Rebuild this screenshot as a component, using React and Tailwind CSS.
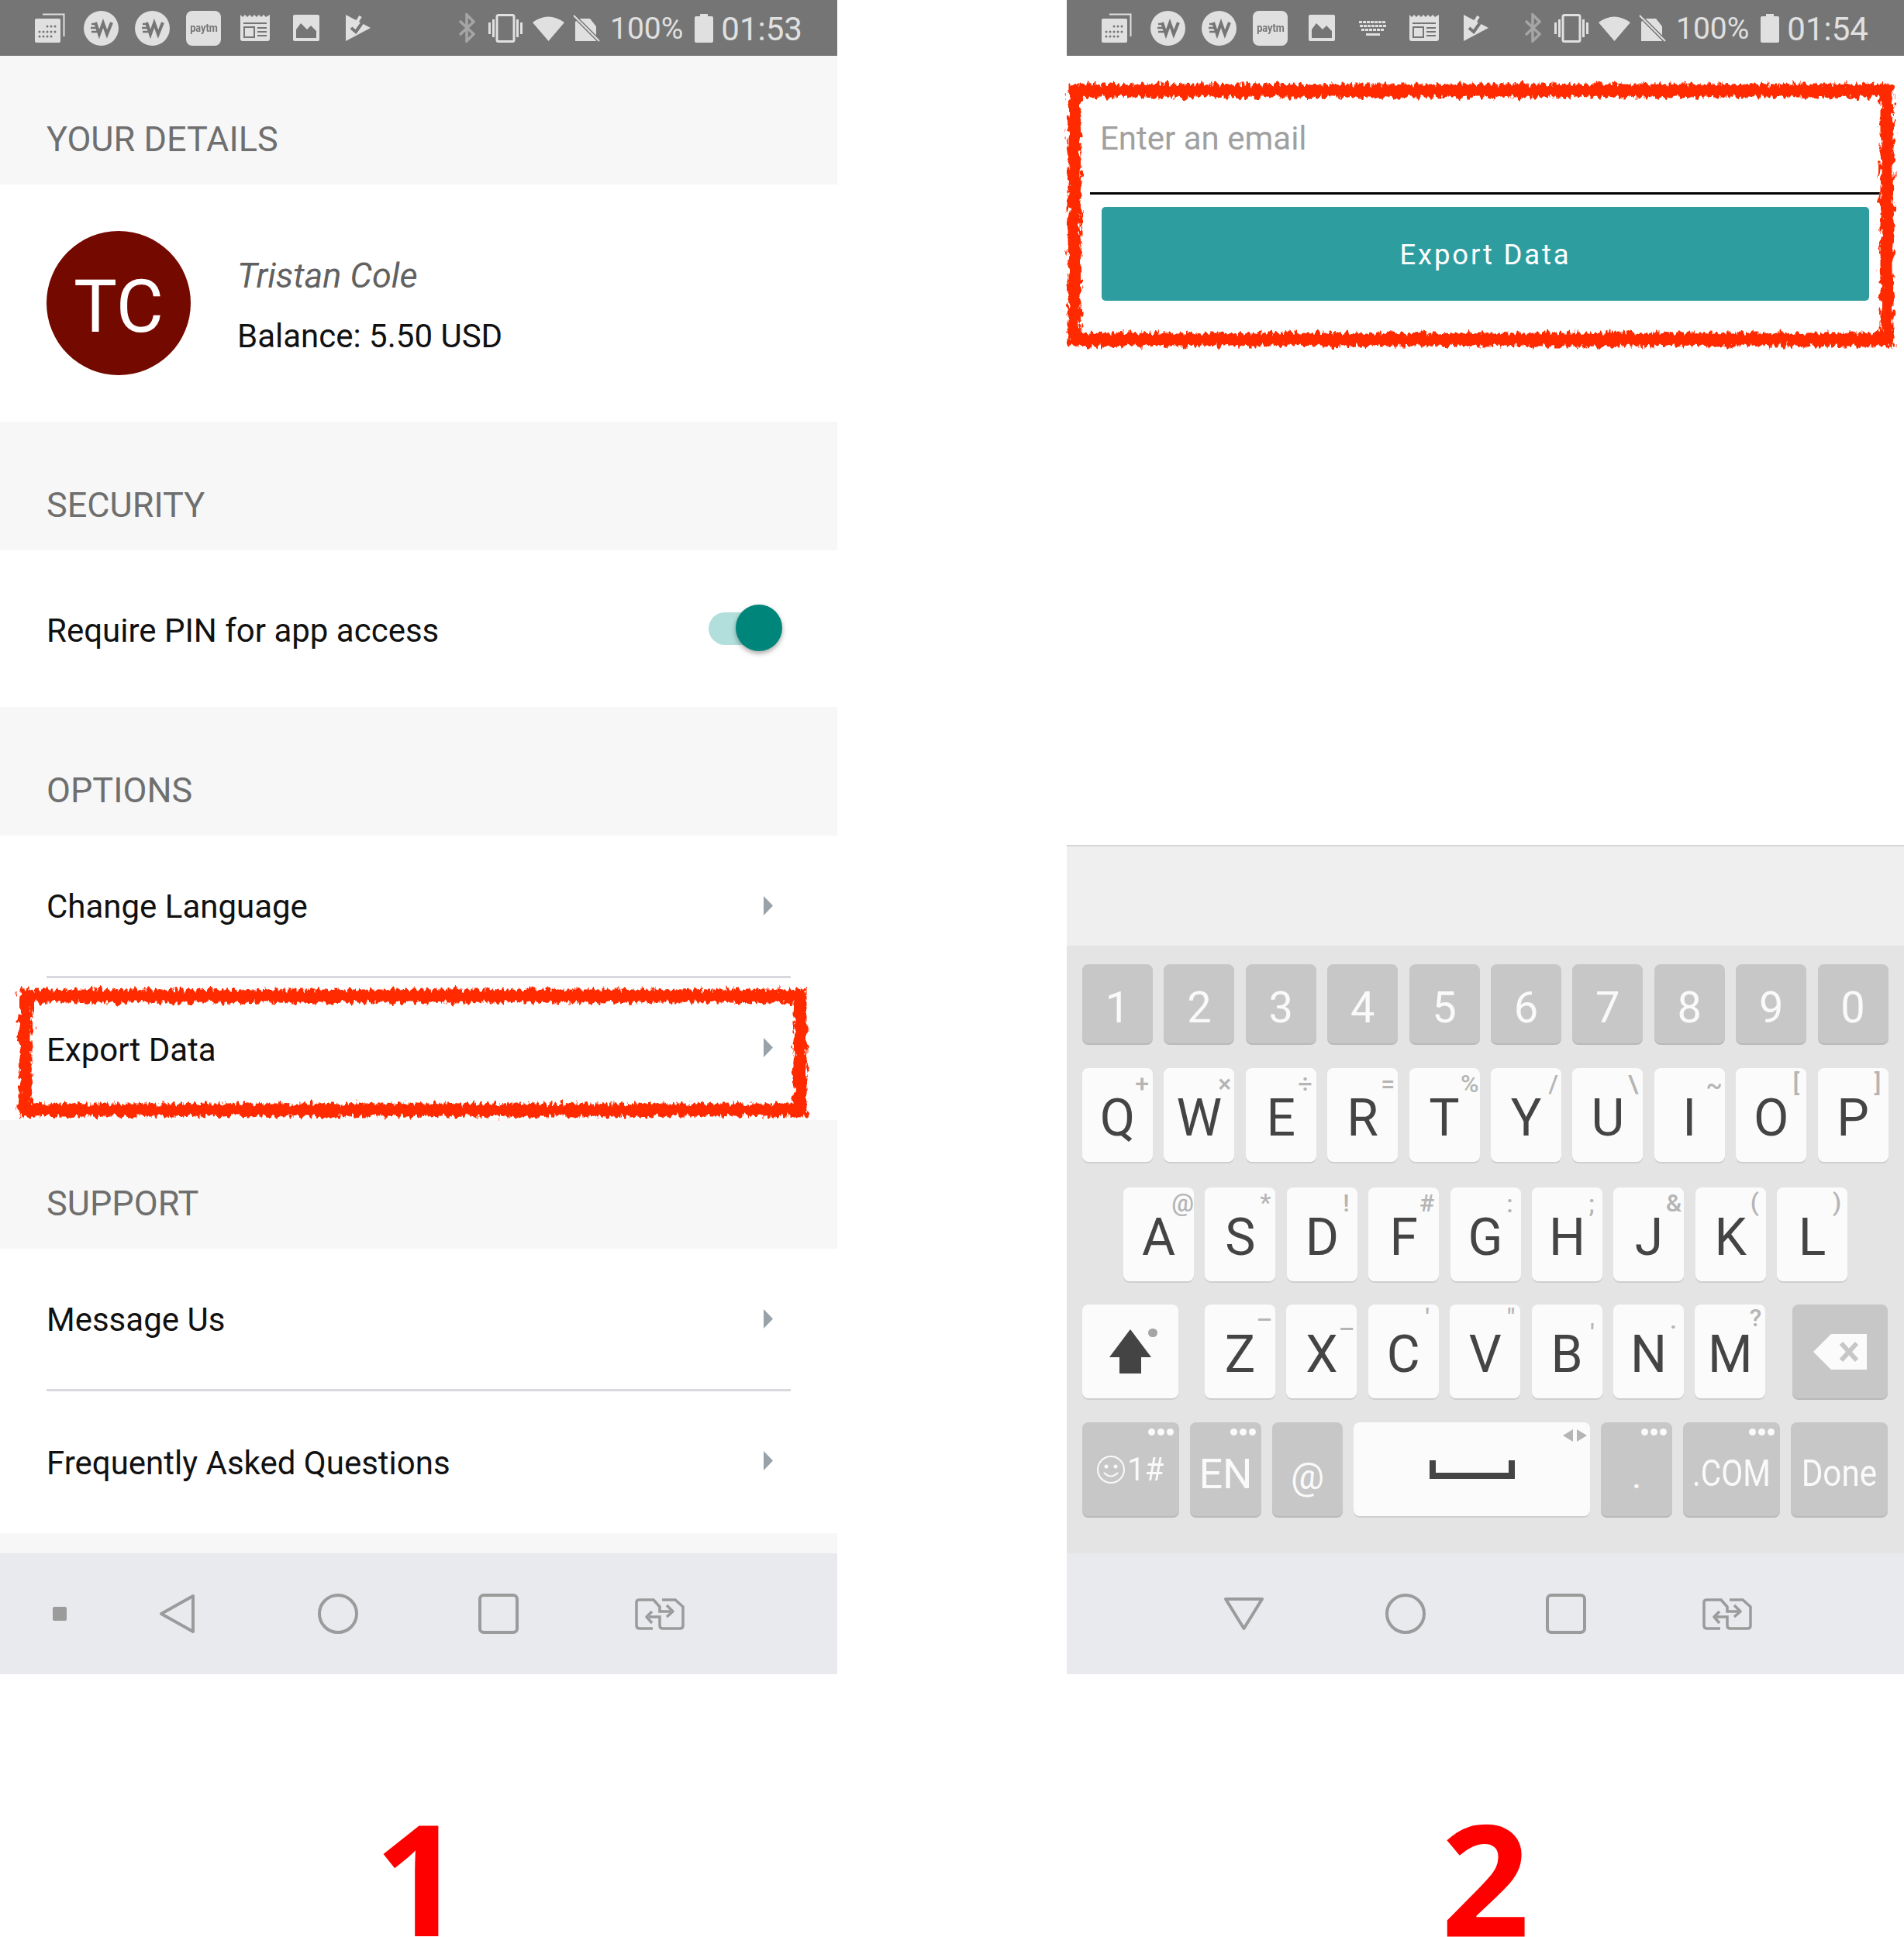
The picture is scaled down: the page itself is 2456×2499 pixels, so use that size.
const ICON = "#e0e0e0";
const BAR = "#757575";

function CalendarIcon({ className }) {
  return (
    <svg className={className} width="39" height="38" viewBox="0 0 39 38">
      <path d="M10 1.5H37.5V30" fill="none" stroke={ICON} strokeWidth="2" />
      <rect x="0" y="7" width="33" height="31" rx="2" fill={ICON} />
      <g fill={BAR}>
        {[16, 21, 26].map((x) => <circle key={x} cx={x} cy="17" r="1.5" />)}
        {[6, 11, 16, 21, 26].map((x) => <circle key={x} cx={x} cy="24" r="1.5" />)}
        {[6, 11, 16, 21].map((x) => <circle key={x} cx={x} cy="30" r="1.5" />)}
      </g>
    </svg>
  );
}

function WIcon({ className }) {
  return (
    <svg className={className} width="45" height="45" viewBox="0 0 45 45">
      <circle cx="22.5" cy="22.5" r="22.5" fill={ICON} />
      <path d="M10 17H17M9 22H16M10 27H17" stroke={BAR} strokeWidth="2.4" fill="none" />
      <path d="M15 15L20 30L25 16L30 30L36 15" stroke={BAR} strokeWidth="4" fill="none" />
    </svg>
  );
}

function PaytmIcon({ className }) {
  return (
    <div className={`flex h-[45px] w-[45px] items-center justify-center rounded-[8px] bg-[#e0e0e0] ${className}`}>
      <span className="scale-x-[0.85] text-[15px] font-bold leading-none text-[#757575]">paytm</span>
    </div>
  );
}

function NewsIcon({ className }) {
  return (
    <svg className={className} width="38" height="34" viewBox="0 0 38 34">
      <path d="M0 0L3 3L6 0L9 3L12 0L15 3L18 0L21 3L24 0L27 3L30 0L33 3L38 0V31Q38 34 35 34H3Q0 34 0 31Z" fill={ICON} />
      <path d="M4 10H34V12H4ZM4 15H19V30H4ZM22 16H34V18H22ZM22 21H34V23H22ZM22 26H34V28H22Z" fill={BAR} />
      <rect x="6" y="17" width="11" height="11" fill={ICON} />
    </svg>
  );
}

function ImageIcon({ className }) {
  return (
    <svg className={className} width="34" height="34" viewBox="0 0 34 34">
      <rect width="34" height="34" rx="2" fill={ICON} />
      <path d="M4 30V19L10 11L18 19L23 14L30 21V30Z" fill={BAR} />
    </svg>
  );
}

function KeyboardIcon({ className }) {
  return (
    <svg className={className} width="36" height="19" viewBox="0 0 36 19" fill={ICON}>
      {[0, 5, 10, 15, 20, 25, 30].map((x) => <rect key={x} x={x} y="0" width="4" height="3" />)}
      {[0, 5, 10, 15, 20, 25, 30].map((x) => <rect key={x} x={x + 1} y="5" width="4" height="3" />)}
      {[0, 5, 10, 15, 20, 25].map((x) => <rect key={x} x={x + 3} y="10" width="4" height="3" />)}
      <rect x="9" y="16" width="18" height="3" />
    </svg>
  );
}

function PlayCheckIcon({ className }) {
  return (
    <svg className={className} width="32" height="34" viewBox="0 0 32 34">
      <path d="M0 0L32 17L0 34Z" fill={ICON} />
      <path d="M7 17L13 22L25 5" stroke={BAR} strokeWidth="4" fill="none" />
      <path d="M14 10L19 2" stroke={ICON} strokeWidth="4" />
    </svg>
  );
}

function StatusBar({ left, time, clockClass }) {
  return (
    <div className="flex h-[72px] items-center bg-[#757575] pl-[45px] text-[#e0e0e0]">
      {left}
      <div className={`flex items-center ${clockClass}`}>
        <svg width="22" height="38" viewBox="0 0 22 38">
          <path d="M2 10L20 27L11 36V2L20 11L2 28" stroke="#a5a5a5" strokeWidth="3.5" fill="none" />
        </svg>
        <svg className="ml-[17px]" width="44" height="37" viewBox="0 0 44 37">
          <rect x="11" y="1.5" width="22" height="34" rx="2" stroke={ICON} strokeWidth="3" fill="none" />
          <path d="M1.5 11V26M6.5 7V30M37.5 7V30M42.5 11V26" stroke={ICON} strokeWidth="3" />
        </svg>
        <svg className="ml-[13px]" width="41" height="33" viewBox="0 0 41 33">
          <path d="M0 9Q20 -6 41 9L20.5 33Z" fill={ICON} />
        </svg>
        <svg className="ml-[11px]" width="35" height="35" viewBox="0 0 35 35">
          <path d="M9 5H22L30 15V34H3V9Z" fill={ICON} />
          <path d="M0 0L34 34" stroke={BAR} strokeWidth="5" />
          <path d="M1 1L34 34" stroke={ICON} strokeWidth="2" />
        </svg>
        <span className="ml-[13px] pt-[3px] text-[39px] leading-none">100%</span>
        <svg className="ml-[15px]" width="24" height="37" viewBox="0 0 24 37">
          <path d="M7 0H17V3H22Q24 3 24 5V35Q24 37 22 37H2Q0 37 0 35V5Q0 3 2 3H7Z" fill={ICON} />
        </svg>
        <span className="ml-[10px] pt-[3px] text-[42px] leading-none">{time}</span>
      </div>
    </div>
  );
}

function NavBar({ back }) {
  return (
    <div className="flex h-[156px] items-center bg-[#e9eaee] text-[#9b9b9b]">
      {back}
      <svg width="52" height="52" viewBox="0 0 52 52">
        <circle cx="26" cy="26" r="24" stroke="#9b9b9b" strokeWidth="4" fill="none" />
      </svg>
      <svg className="ml-[155px]" width="52" height="52" viewBox="0 0 52 52">
        <rect x="2" y="2" width="48" height="48" rx="5" stroke="#9b9b9b" strokeWidth="4" fill="none" />
      </svg>
      <svg className="ml-[150px]" width="64" height="41" viewBox="0 0 64 41" fill="none" stroke="#9b9b9b" strokeWidth="3.5">
        <path d="M23 39H6Q2 39 2 35V5Q2 2 6 2H24L32 11V17H46" />
        <path d="M41 9L49 17L41 24" strokeLinejoin="round" />
        <path d="M35 2H52L62 11V35Q62 39 58 39H36Q32 39 32 35V24H18" />
        <path d="M22 17L15 24L22 32" strokeLinejoin="round" />
      </svg>
    </div>
  );
}

function SectionHeader({ title }) {
  return (
    <div className="h-[166px] bg-[#f7f7f7] pl-[60px] pt-[83px] text-[45px] leading-[50px] text-[#6f6f6f]">{title}</div>
  );
}

function MenuRow({ label, divider }) {
  return (
    <div className="mx-[60px] flex h-[183.5px] items-center justify-between border-b-[3px] border-[#d8d8de]" style={divider ? undefined : { borderColor: "transparent" }}>
      <span className={`text-[42px] text-[#111] ${divider ? "pt-[2px]" : "pt-[6px]"}`}>{label}</span>
      <svg className="mr-[23px]" width="12" height="25" viewBox="0 0 12 25">
        <path d="M0 0L12 12.5L0 25Z" fill="#98a2a8" />
      </svg>
    </div>
  );
}

function RoughBox({ x, y, w, h, id }) {
  return (
    <svg className="pointer-events-none absolute left-0" width="1080" height="600" style={{ top: y - 40, overflow: "visible" }}>
      <defs>
        <filter id={id} x="-5%" y="-20%" width="110%" height="140%">
          <feTurbulence type="fractalNoise" baseFrequency="0.22 0.09" numOctaves="3" seed="4" />
          <feDisplacementMap in="SourceGraphic" scale="14" xChannelSelector="R" yChannelSelector="G" />
        </filter>
      </defs>
      <rect x={x} y="40" width={w} height={h} fill="none" stroke="#ff2a00" strokeWidth="17" filter={`url(#${id})`} />
    </svg>
  );
}

function Phone1() {
  return (
    <div className="relative w-[1080px]">
      <StatusBar
        time="01:53"
        clockClass="ml-[113px]"
        left={
          <>
            <CalendarIcon />
            <WIcon className="ml-[24px]" />
            <WIcon className="ml-[21px]" />
            <PaytmIcon className="ml-[21px]" />
            <NewsIcon className="ml-[25px]" />
            <ImageIcon className="ml-[30px]" />
            <PlayCheckIcon className="ml-[34px]" />
          </>
        }
      />
      <SectionHeader title="YOUR DETAILS" />
      <div className="flex h-[306px] items-center pl-[60px]">
        <div className="flex h-[186px] w-[186px] items-center justify-center rounded-full bg-[#740900] pt-[10px] text-[94px] text-white">TC</div>
        <div className="ml-[60px] pt-[8px]">
          <div className="text-[45px] italic leading-[50px] text-[#616161]">Tristan Cole</div>
          <div className="mt-[28px] text-[42px] leading-[50px] text-[#111]">Balance: 5.50 USD</div>
        </div>
      </div>
      <SectionHeader title="SECURITY" />
      <div className="flex h-[202px] items-center justify-between pl-[60px]">
        <span className="pt-[4px] text-[42px] text-[#111]">Require PIN for app access</span>
        <div className="relative mr-[80px] h-[42px] w-[86px] rounded-full bg-[#b2dfdb]">
          <div className="absolute left-[35px] top-[-10px] h-[60px] w-[60px] rounded-full bg-[#00857a] shadow-[0_3px_6px_rgba(0,0,0,0.35)]"></div>
        </div>
      </div>
      <SectionHeader title="OPTIONS" />
      <MenuRow label="Change Language" divider />
      <MenuRow label="Export Data" />
      <SectionHeader title="SUPPORT" />
      <MenuRow label="Message Us" divider />
      <MenuRow label="Frequently Asked Questions" />
      <div className="h-[26px] bg-[#f7f7f7]"></div>
      <NavBar
        back={
          <>
            <div className="ml-[68px] h-[18px] w-[18px] rounded-[2px] bg-[#9b9b9b]"></div>
            <svg className="ml-[119px] mr-[157px]" width="48" height="52" viewBox="0 0 48 52">
              <path d="M44 3L3 26L44 49Z" stroke="#9b9b9b" strokeWidth="4" fill="none" strokeLinejoin="round" />
            </svg>
          </>
        }
      />
      <RoughBox id="rough1" x={33} y={1285} w={999} h={147} />
      <div className="mt-[161px] text-center font-['Open_Sans'] text-[200px] font-bold leading-[200px] text-[#ff0000]">1</div>
    </div>
  );
}

const hintBase = "absolute text-[32px] font-medium leading-none text-[#b5b5b5]";

function Key({ label, hint, hintClass = "right-[3px] top-[5px]", className = "w-[91px] h-[121px] text-[66px]" }) {
  return (
    <div className={`relative flex items-center justify-center rounded-[8px] bg-[#fbfbfb] pt-[8px] leading-none text-[#444] shadow-[0_2px_0_#cfcfcf] ${className}`}>
      {label}
      {hint && <span className={`${hintBase} ${hintClass}`}>{hint}</span>}
    </div>
  );
}

function GrayKey({ children, dots, className }) {
  return (
    <div className={`relative flex h-[121px] items-center justify-center rounded-[8px] bg-[#c7c7c7] text-[#fafafa] shadow-[0_2px_0_#b9b9b9] ${className}`}>
      {children}
      {dots && (
        <div className="absolute right-[7px] top-[8px] flex gap-[3px]">
          <div className="h-[9px] w-[9px] rounded-full bg-[#fafafa]"></div>
          <div className="h-[9px] w-[9px] rounded-full bg-[#fafafa]"></div>
          <div className="h-[9px] w-[9px] rounded-full bg-[#fafafa]"></div>
        </div>
      )}
    </div>
  );
}

const row1 = [
  ["Q", "+", "right-[5px] top-[4px]"],
  ["W", "×", "right-[4px] top-[4px]"],
  ["E", "÷", "right-[5px] top-[4px]"],
  ["R", "=", "right-[4px] top-[4px]"],
  ["T", "%", "right-[1px] top-[4px]"],
  ["Y", "/", "right-[4px] top-[4px]"],
  ["U", "\\", "right-[6px] top-[4px]"],
  ["I", "~", "right-[3px] top-[6px]"],
  ["O", "[", "right-[9px] top-[3px]"],
  ["P", "]", "right-[9px] top-[3px]"],
];
const row2 = [
  ["A", "@", "right-[0px] top-[4px]"], ["S", "*", "right-[6px] top-[3px]"], ["D", "!", "right-[10px] top-[4px]"], ["F", "#", "right-[6px] top-[4px]"], ["G", ":", "right-[10px] top-[5px]"],
  ["H", ";", "right-[10px] top-[5px]"], ["J", "&", "right-[3px] top-[4px]"], ["K", "(", "right-[9px] top-[3px]"], ["L", ")", "right-[8px] top-[3px]"],
];
const row3 = [
  ["Z", "–", "right-[4px] top-[4px]"], ["X", "–", "right-[3px] top-[16px] text-[22px]"], ["C", "'", "right-[12px] top-[0px] text-[24px]"],
  ["V", "\"", "right-[7px] top-[0px] text-[24px]"], ["B", "'", "right-[10px] top-[20px]"], ["N", ".", "right-[9px] top-[4px]"], ["M", "?", "right-[5px] top-[1px]"],
];

function Keyboard() {
  return (
    <div>
      <div className="h-[130px] border-t-2 border-[#d5d5d5] bg-[#efefef]"></div>
      <div className="h-[784px] bg-[#e4e4e4] pl-[20px] pt-[24px]">
        <div className="flex h-[104px] gap-[14.4px]">
          {["1", "2", "3", "4", "5", "6", "7", "8", "9", "0"].map((n) => (
            <GrayKey key={n} className="!h-[102px] w-[91px] pt-[9px] text-[56px]">{n}</GrayKey>
          ))}
        </div>
        <div className="mt-[30px] flex gap-[14.4px]">
          {row1.map(([l, h, c]) => <Key key={l} label={l} hint={h} hintClass={c} />)}
        </div>
        <div className="ml-[53px] mt-[33px] flex gap-[14.4px]">
          {row2.map(([l, h, c]) => <Key key={l} label={l} hint={h} hintClass={c} />)}
        </div>
        <div className="mt-[30px] flex">
          <Key
            className="h-[121px] w-[124px]"
            label={
              <>
                <svg className="mb-[8px]" width="54" height="57" viewBox="0 0 54 57">
                  <path d="M27 0L54 36H41V57H13V36H0Z" fill="#444" />
                </svg>
                <div className="absolute left-[85px] top-[31px] h-[11px] w-[12px] rounded-full bg-[#a5a5a5]"></div>
              </>
            }
          />
          <div className="ml-[34px] flex gap-[14.4px]">
            {row3.map(([l, h, c]) => <Key key={l} label={l} hint={h} hintClass={c} />)}
          </div>
          <GrayKey className="ml-[35px] w-[123px]">
            <svg width="69" height="46" viewBox="0 0 69 46">
              <path d="M23 0H69V46H23L0 23Z" fill="#fbfbfb" />
              <path d="M36 12L56 34M56 12L36 34" stroke="#c7c7c7" strokeWidth="6" />
            </svg>
          </GrayKey>
        </div>
        <div className="mt-[31px] flex gap-[14px]">
          <GrayKey dots className="w-[125px] text-[42px]">
            <svg className="mr-[1px]" width="38" height="38" viewBox="0 0 38 38" fill="none" stroke="#fafafa" strokeWidth="2">
              <circle cx="19" cy="19" r="17" />
              <circle cx="13" cy="15" r="1.5" fill="#fafafa" />
              <circle cx="25" cy="15" r="1.5" fill="#fafafa" />
              <path d="M10 23Q19 32 28 23" />
            </svg>
            <span className="scale-x-[0.95] leading-none">1#</span>
          </GrayKey>
          <GrayKey dots className="w-[92px] text-[54px]"><span className="pt-[12px]">EN</span></GrayKey>
          <GrayKey className="w-[91px] text-[48px]"><span className="pt-[18px]">@</span></GrayKey>
          <Key
            className="!pt-0 h-[121px] w-[305px]"
            label={
              <>
                <svg width="110" height="24" viewBox="0 0 110 24">
                  <path d="M4 0V20H106V0" fill="none" stroke="#444" strokeWidth="8" />
                </svg>
                <svg className="absolute right-[4px] top-[9px]" width="31" height="16" viewBox="0 0 31 16" fill="#b5b5b5">
                  <path d="M13 0V16L0 8ZM18 0L31 8L18 16Z" />
                </svg>
              </>
            }
          />
          <GrayKey dots className="w-[92px] text-[48px]"><span className="pt-[16px]">.</span></GrayKey>
          <GrayKey dots className="w-[125px] text-[48px]"><span className="scale-x-[0.85] pt-[10px]">.COM</span></GrayKey>
          <GrayKey className="w-[125px] text-[48px]"><span className="scale-x-[0.88] pt-[10px]">Done</span></GrayKey>
        </div>
      </div>
    </div>
  );
}

function Phone2() {
  return (
    <div className="relative w-[1080px]">
      <StatusBar
        time="01:54"
        clockClass="ml-[46px]"
        left={
          <>
            <CalendarIcon />
            <WIcon className="ml-[24px]" />
            <WIcon className="ml-[21px]" />
            <PaytmIcon className="ml-[21px]" />
            <ImageIcon className="ml-[27px]" />
            <KeyboardIcon className="ml-[31px]" />
            <NewsIcon className="ml-[29px]" />
            <PlayCheckIcon className="ml-[32px]" />
          </>
        }
      />
      <div className="h-[1018px] pt-[74px]">
        <div className="mx-[30px] h-[105px] border-b-[3px] border-black pl-[13px] pt-[8px] text-[42px] leading-[50px] text-[#a0a0a0]">Enter an email</div>
        <div className="ml-[45px] mt-[16px] flex h-[121px] w-[990px] items-center justify-center rounded-[5px] bg-[#2d9d9f] pt-[3px] text-[36.5px] tracking-[2.8px] text-white">Export Data</div>
      </div>
      <Keyboard />
      <NavBar
        back={
          <svg className="ml-[202px] mr-[156px]" width="53" height="44" viewBox="0 0 53 44">
            <path d="M3 3H50L26.5 41Z" stroke="#9b9b9b" strokeWidth="4" fill="none" strokeLinejoin="round" />
          </svg>
        }
      />
      <RoughBox id="rough2" x={10} y={117} w={1048} h={321} />
      <div className="mt-[161px] text-center font-['Open_Sans'] text-[200px] font-bold leading-[200px] text-[#ff0000]">2</div>
    </div>
  );
}

export default function App() {
  return (
    <div className="flex h-[2499px] w-[2456px] gap-[296px] overflow-hidden bg-white font-['Roboto',sans-serif]">
      <Phone1 />
      <Phone2 />
    </div>
  );
}
